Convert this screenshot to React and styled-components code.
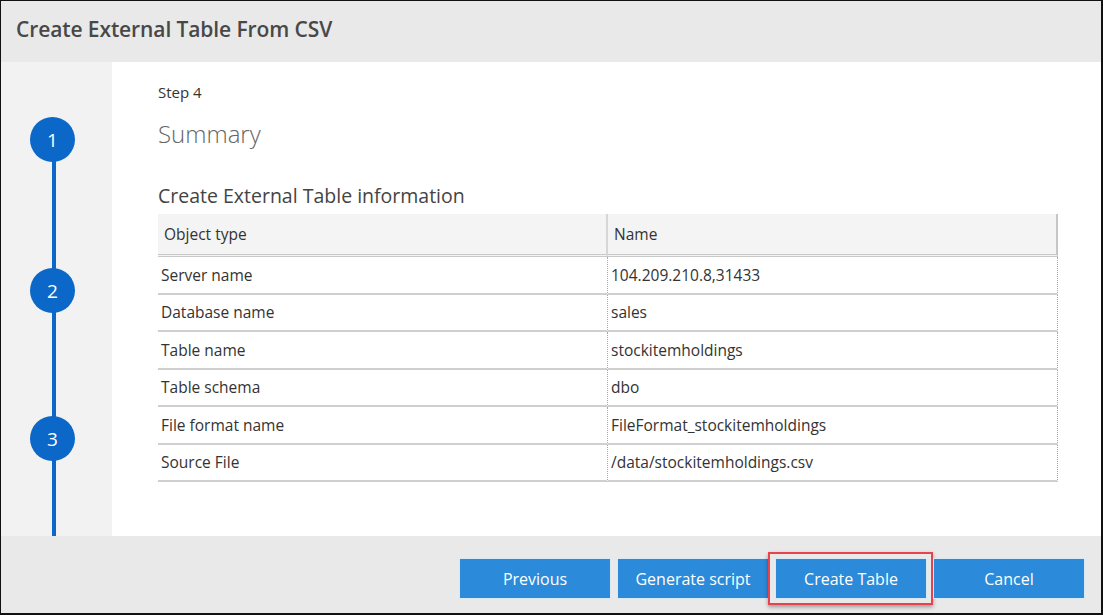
import React from 'react';
import styled, { createGlobalStyle } from 'styled-components';

const GlobalStyle = createGlobalStyle`
  html, body {
    margin: 0;
    padding: 0;
    background: #ffffff;
  }
  body {
    font-family: "Open Sans", "Noto Sans", "Liberation Sans", sans-serif;
  }
`;

const rows = [
  { type: 'Server name', name: '104.209.210.8,31433' },
  { type: 'Database name', name: 'sales' },
  { type: 'Table name', name: 'stockitemholdings' },
  { type: 'Table schema', name: 'dbo' },
  { type: 'File format name', name: 'FileFormat_stockitemholdings' },
  { type: 'Source File', name: '/data/stockitemholdings.csv' },
];

const steps = [
  { n: 1, gapBefore: 55 },
  { n: 2, gapBefore: 106 },
  { n: 3, gapBefore: 103 },
];

const App = () => {
  return (
    <>
      <GlobalStyle />
      <Dialog>
        <Header>
          <Title>Create External Table From CSV</Title>
        </Header>
        <Body>
          <Stepper>
            <StepLine />
            {steps.map((s) => (
              <StepCircle key={s.n} $gap={s.gapBefore}>{s.n}</StepCircle>
            ))}
          </Stepper>
          <Main>
            <StepLabel>Step 4</StepLabel>
            <PageTitle>Summary</PageTitle>
            <SectionTitle>Create External Table information</SectionTitle>
            <Grid>
              <HeadCell>Object type</HeadCell>
              <HeadCell $last>Name</HeadCell>
              {rows.map((r) => (
                <React.Fragment key={r.type}>
                  <Cell>{r.type}</Cell>
                  <Cell $value>{r.name}</Cell>
                </React.Fragment>
              ))}
            </Grid>
          </Main>
        </Body>
        <Footer>
          <Button>Previous</Button>
          <Button>Generate script</Button>
          <Button $highlight>Create Table</Button>
          <Button>Cancel</Button>
        </Footer>
      </Dialog>
    </>
  );
};

const Dialog = styled.div`
  width: 1103px;
  height: 615px;
  box-sizing: border-box;
  border: 1px solid #111;
  border-right-width: 2px;
  border-bottom-width: 2px;
  display: flex;
  flex-direction: column;
  overflow: hidden;
`;

const Header = styled.div`
  height: 61px;
  background: #e9e9e9;
  display: flex;
  align-items: center;
  padding-left: 15px;
  flex-shrink: 0;
`;

const Title = styled.h1`
  margin: 0;
  font-size: 21px;
  font-weight: 600;
  color: #484848;
  letter-spacing: -0.1px;
  padding-bottom: 6px;
`;

const Body = styled.div`
  flex: 1;
  display: flex;
  min-height: 0;
`;

const Stepper = styled.div`
  width: 113px;
  background: #f2f2f2;
  display: flex;
  flex-direction: column;
  align-items: center;
  padding-right: 8px;
  box-sizing: border-box;
  position: relative;
`;

const StepLine = styled.div`
  position: absolute;
  left: 51px;
  top: 90px;
  bottom: 0;
  width: 4px;
  background: #0b67c8;
`;

const StepCircle = styled.div`
  position: relative;
  margin-top: ${(p) => p.$gap}px;
  width: 45px;
  height: 45px;
  border-radius: 50%;
  background: #0b67c8;
  color: #ffffff;
  font-size: 19px;
  display: flex;
  align-items: center;
  justify-content: center;
`;

const Main = styled.div`
  flex: 1;
  background: #ffffff;
  padding: 20px 43px 0 46px;
  display: flex;
  flex-direction: column;
`;

const StepLabel = styled.div`
  font-size: 15px;
  color: #333333;
  line-height: 20px;
`;

const PageTitle = styled.div`
  font-size: 24px;
  font-weight: 300;
  color: #666666;
  margin-top: 15px;
  line-height: 34px;
`;

const SectionTitle = styled.div`
  font-size: 19.5px;
  color: #444444;
  margin-top: 32px;
  line-height: 26px;
`;

const Grid = styled.div`
  margin-top: 5px;
  display: grid;
  grid-template-columns: 450px 450px;
  width: 900px;
`;

const HeadCell = styled.div`
  height: 40px;
  background: #f4f4f4;
  border-bottom: 3px double #c8c8c8;
  border-right: 2px solid ${(p) => (p.$last ? '#c6c6c6' : '#d6d6d6')};
  display: flex;
  align-items: center;
  padding-left: 6px;
  font-size: 15.5px;
  color: #333333;
`;

const Cell = styled.div`
  height: 35.5px;
  border-bottom: 2px solid #cfcfcf;
  border-right: 1px dotted #a8a8a8;
  display: flex;
  align-items: center;
  padding-left: 3px;
  font-size: 15.5px;
  color: #333333;
`;

const Footer = styled.div`
  height: 77px;
  background: #e9e9e9;
  display: flex;
  align-items: flex-start;
  justify-content: flex-end;
  gap: 8px;
  padding: 23px 17px 0 0;
  box-sizing: border-box;
  flex-shrink: 0;
`;

const Button = styled.button`
  position: relative;
  width: 150px;
  height: 39px;
  border: none;
  background: #2b8ad9;
  color: #ffffff;
  font-family: inherit;
  font-size: 16px;
  cursor: pointer;
  box-shadow: 0 0 0 1px #d9e8f5;

  ${(p) =>
    p.$highlight &&
    `
    &::after {
      content: '';
      position: absolute;
      left: -8px;
      right: -7px;
      top: -7px;
      bottom: -7px;
      border: 2px solid #e8424c;
      box-shadow: 0 2px 4px rgba(0, 0, 0, 0.35);
      pointer-events: none;
    }
  `}
`;

export default App;
